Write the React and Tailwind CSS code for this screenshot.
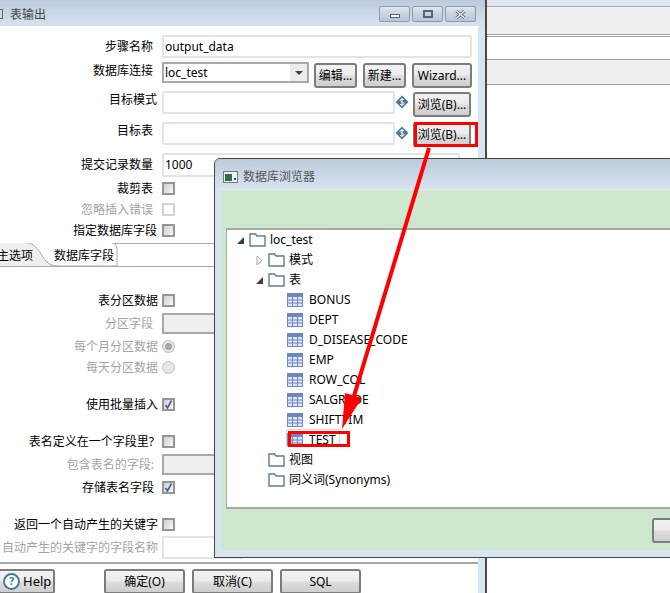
import React from 'react';

const cjk = "font-['Noto_Sans','Noto_Sans_CJK_SC',sans-serif]";
const glossy = "bg-[linear-gradient(#f3f3f3,#ebebeb_48%,#dcdcdc_52%,#cfcfcf)]";

const Btn = ({ children, className = '' }) => (
    <div className={`flex items-center justify-center border-2 border-[#7d7d7d] rounded-[3px] text-[12px] text-black ${glossy} ${className}`}>
        {children}
    </div>
);

const Input = ({ children, className = '' }) => (
    <div className={`flex items-center pl-px border-2 border-[#e3e4ea] rounded-[2px] bg-white text-[12px] text-black ${className}`}>
        {children}
    </div>
);

const Check = ({ checked = false, disabled = false }) => (
    <div className={`w-[13px] h-[13px] border-2 border-solid flex items-center justify-center ${disabled ? 'border-[#d2d2d2] bg-white' : 'border-[#959595] bg-[linear-gradient(135deg,#d0d0d0,#f6f6f6)]'}`}>
        {checked && (
            <svg width="9" height="9" viewBox="0 0 9 9">
                <path d="M1.5 5 L3.5 8 L7.5 0.5" fill="none" stroke="#4a5aa0" strokeWidth="1.6" />
            </svg>
        )}
    </div>
);

const Radio = ({ on = false }) => (
    <div className="w-[13px] h-[13px] rounded-full border border-[#bdbdbd] bg-[#e6e6e6] flex items-center justify-center">
        {on && <div className="w-[7px] h-[7px] rounded-full bg-[#a8a8a8]" />}
    </div>
);

const Row = ({ label, pad = 'pr-[9px]', muted = false, className = '', children }) => (
    <div className={`flex items-center shrink-0 ${className}`}>
        <div className={`w-[162px] shrink-0 text-right whitespace-nowrap text-[12px] ${pad} ${muted ? 'text-[#a3a3a3]' : 'text-black'}`}>{label}</div>
        {children}
    </div>
);

const Dollar = () => (
    <svg width="14" height="14" viewBox="0 0 14 14" className="shrink-0">
        <path d="M7 0.5 L13.5 7 L7 13.5 L0.5 7 Z" fill="#4d7a99" />
        <path d="M9 4.8 C8.2 3.8 5.2 3.8 5.2 5.4 C5.2 7 8.9 6.8 8.9 8.6 C8.9 10.2 5.8 10.2 5 9.2 M7 3 V11" fill="none" stroke="#fff" strokeWidth="1" />
    </svg>
);

const WinBtn = ({ children, className = '' }) => (
    <div className={`h-[16px] flex items-center justify-center border border-[#8a9bb2] rounded-[2px] bg-[linear-gradient(#dfe6ee,#c8d3e0_50%,#b8c5d5)] ${className}`}>
        {children}
    </div>
);

const Folder = () => (
    <svg width="17" height="14" viewBox="0 0 17 14" className="shrink-0">
        <path d="M1 13 V1 H6.5 L8 3 H16 V13 Z" fill="#fff" stroke="#5a7d96" strokeWidth="1.4" />
    </svg>
);

const TableIcon = () => (
    <svg width="16" height="14" viewBox="0 0 16 14" className="shrink-0">
        <rect x="0.5" y="0.5" width="15" height="13" fill="#dfe6f6" stroke="#6d86c4" />
        <rect x="0.5" y="0.5" width="15" height="3.5" fill="#6d86c4" />
        <path d="M0.5 7 H15.5 M0.5 10 H15.5 M5.5 4 V13.5 M10.5 4 V13.5" stroke="#6d86c4" />
    </svg>
);

const Open = () => (
    <svg width="9" height="9" viewBox="0 0 9 9" className="shrink-0">
        <path d="M8 1 V8 H1 Z" fill="#404040" />
    </svg>
);

const Closed = () => (
    <svg width="9" height="11" viewBox="0 0 9 11" className="shrink-0">
        <path d="M2 1 L7 5.5 L2 10 Z" fill="#fff" stroke="#a6a6a6" />
    </svg>
);

const Node = ({ indent, arrow, icon, children, className = '' }) => (
    <div className={`h-[20px] flex items-center text-[12px] text-black whitespace-nowrap ${indent} ${className}`}>
        {arrow !== undefined && <div className="w-[14px] flex justify-center pr-[3px]">{arrow}</div>}
        {icon}
        <span className={icon.type === TableIcon ? 'ml-[6px]' : 'ml-[4px]'}>{children}</span>
    </div>
);

const tables = ['BONUS', 'DEPT', 'D_DISEASE_CODE', 'EMP', 'ROW_COL', 'SALGRADE', 'SHIFTTIM'];

const FormWindow = () => (
    <div className="absolute left-0 top-0 w-[487px] h-[593px] flex flex-col border-r-2 border-[#4a4a4a] bg-[#d7e4f2]">
        <div className="h-[26px] shrink-0 flex items-start bg-[linear-gradient(#bccbdb,#d6e2ef)]">
            <div className="w-[3px] h-[10px] mt-[9px] border-y border-r border-[#666]" />
            <span className="ml-[7px] mt-[6px] text-[12px] text-[#444]">表输出</span>
            <div className="ml-auto mr-[9px] mt-[6px] flex gap-[2px]">
                <WinBtn className="w-[31px]"><div className="w-[10px] h-[4px] mt-[4px] border border-[#55647a] bg-white" /></WinBtn>
                <WinBtn className="w-[31px]"><div className="w-[10px] h-[8px] border-2 border-[#55647a]" /></WinBtn>
                <WinBtn className="w-[31px]">
                    <svg width="11" height="9" viewBox="0 0 11 9">
                        <path d="M1.5 1 L9.5 8 M9.5 1 L1.5 8" stroke="#5b6b80" strokeWidth="3" />
                        <path d="M1.5 1 L9.5 8 M9.5 1 L1.5 8" stroke="#fff" strokeWidth="1.2" />
                    </svg>
                </WinBtn>
            </div>
        </div>
        <div className="flex-1 mr-[7px] bg-white flex flex-col pt-[9px] min-h-0">
            <Row label="步骤名称" className="h-[23px]"><Input className="w-[310px] h-[23px]">output_data</Input></Row>
            <Row label="数据库连接" className="mt-[4px] h-[26px] !items-start">
                <div className="w-[147px] h-[21px] flex items-center pl-px border-2 border-[#a9a9a9] text-[12px] justify-between">
                    loc_test
                    <div className="w-[17px] h-full bg-[#ececec] flex items-center justify-center">
                        <div className="border-x-[4px] border-x-transparent border-t-[4px] border-t-[#444]" />
                    </div>
                </div>
                <Btn className="w-[43px] h-[25px] ml-[5px] mt-[1px]">编辑...</Btn>
                <Btn className="w-[43px] h-[25px] ml-[6px] mt-[1px]">新建...</Btn>
                <Btn className="w-[60px] h-[25px] ml-[6px] mt-[1px]">Wizard...</Btn>
            </Row>
            <Row label="目标模式" pad="pr-[5px]" className="mt-[3px] h-[26px] !items-start">
                <Input className="w-[233px] h-[23px]" />
                <div className="mt-[4px]"><Dollar /></div>
                <Btn className="w-[58px] h-[25px] ml-[4px] mt-[1px]">浏览(B)...</Btn>
            </Row>
            <Row label="目标表" className="mt-[5px] h-[26px] !items-start">
                <Input className="w-[233px] h-[23px]" />
                <div className="mt-[4px]"><Dollar /></div>
                <Btn className="w-[58px] h-[25px] ml-[4px]">浏览(B)...</Btn>
            </Row>
            <Row label="提交记录数量" className="mt-[5px] h-[24px]"><Input className="w-[298px] h-[24px]">1000</Input></Row>
            <Row label="裁剪表" className="h-[21px] mt-[1px]"><Check /></Row>
            <Row label="忽略插入错误" muted className="h-[21px]"><Check disabled /></Row>
            <Row label="指定数据库字段" pad="pr-[5px]" className="h-[21px]"><Check /></Row>
            <div className="relative h-[24px] mt-[2px] shrink-0 border-y border-[#a9a9a9] text-[12px]">
                <svg width="120" height="24" viewBox="0 0 120 24" className="absolute left-0 -top-px">
                    <path d="M0 0 H27 C34 0 38 6 43 14 C47 21 52 23 60 23 H0 Z" fill="#efefef" />
                    <path d="M27 0 C34 0 38 6 43 14 C47 21 52 23 60 23 H117 V7 C117 3 115 0 112 0" fill="#fff" stroke="#a9a9a9" />
                </svg>
                <span className="absolute -left-[3px] top-[3px]">主选项</span>
                <span className="absolute left-[54px] top-[3px]">数据库字段</span>
            </div>
            <Row label="表分区数据" pad="pr-[4px]" className="mt-[22px] h-[23px]"><Check /></Row>
            <Row label="分区字段" muted className="h-[23px]"><div className="w-[80px] h-[21px] border-2 border-[#a9a9a9] bg-[#efefef]" /></Row>
            <Row label="每个月分区数据" muted pad="pr-[4px]" className="h-[23px]"><Radio on /></Row>
            <Row label="每天分区数据" muted pad="pr-[4px]" className="h-[19px]"><Radio /></Row>
            <Row label="使用批量插入" pad="pr-[4px]" className="mt-[16px] h-[23px]"><Check checked /></Row>
            <Row label="表名定义在一个字段里?" pad="pr-[8px]" className="mt-[14px] h-[23px]"><Check /></Row>
            <Row label="包含表名的字段:" muted pad="pr-[8px]" className="h-[23px]"><div className="w-[80px] h-[21px] border-2 border-[#a9a9a9] bg-[#efefef]" /></Row>
            <Row label="存储表名字段" pad="pr-[8px]" className="h-[23px]"><Check checked /></Row>
            <Row label="返回一个自动产生的关键字" pad="pr-[4px]" className="mt-[14px] h-[23px]"><Check /></Row>
            <Row label="自动产生的关键字的字段名称" muted pad="pr-[4px]" className="h-[23px]"><div className="w-[80px] h-[23px] border-2 border-[#e3e4ea]" /></Row>
            <div className="mt-[3px] border-t-2 border-[#a9a9a9] flex items-start pt-[5px] gap-[7px] shrink-0 relative">
                <Btn className="w-[57px] h-[25px] -ml-[2px] mr-[42px] gap-[3px] !justify-start pl-[3px] text-[13px]">
                    <span className="w-[17px] h-[17px] rounded-full border-2 border-[#4a7a9b] bg-white flex items-center justify-center text-[11px] font-bold text-[#4a7a9b]">?</span>
                    Help
                </Btn>
                <Btn className="w-[81px] h-[25px]">确定(O)</Btn>
                <Btn className="w-[81px] h-[25px]">取消(C)</Btn>
                <Btn className="w-[81px] h-[25px]">SQL</Btn>
            </div>
        </div>
    </div>
);

const BackWindow = () => (
    <div className="absolute left-[487px] top-0 right-0 h-[159px] flex flex-col bg-white">
        <div className="h-[7px] shrink-0 bg-[#e0e6f4] border-b border-[#a9a9b9]" />
        <div className="h-[27px] shrink-0 bg-[#efefef]" />
        <div className="h-[3px] shrink-0 border-y border-[#a0a0a0]" />
        <div className="h-[22px] shrink-0" />
        <div className="h-[26px] shrink-0 bg-[#efefef] border-y border-[#a0a0a0]" />
    </div>
);

const BrowserDialog = () => (
    <div className="absolute left-[214px] top-[158px] w-[480px] h-[400px] flex flex-col border border-[#444] rounded-tl-[6px] overflow-hidden bg-[#d7e4f2]">
        <div className="h-[30px] shrink-0 flex items-center pt-[6px] bg-[linear-gradient(#bccbdb,#d6e2ef)]">
            <svg width="15" height="12" viewBox="0 0 15 12" className="ml-[8px]">
                <rect x="0.5" y="0.5" width="14" height="11" fill="#f2f2f2" stroke="#777" />
                <rect x="2" y="3" width="7" height="7" fill="#2f6f4f" />
                <rect x="11" y="7" width="2" height="2" fill="#444" />
            </svg>
            <span className="ml-[5px] text-[12px] text-[#555]">数据库浏览器</span>
        </div>
        <div className="flex-1 ml-[6px] mb-[7px] flex flex-col bg-[#cde8cf] border-t border-[#e8e8e8]">
            <div className="h-[38px] shrink-0" />
            <div className="h-[281px] ml-[5px] shrink-0 bg-white border-y-2 border-l border-[#a9a9a9] border-t-[#a9a9a9]">
                <Node indent="ml-[8px]" arrow={<Open />} icon={<Folder />}>loc_test</Node>
                <Node indent="ml-[27px]" arrow={<Closed />} icon={<Folder />}>模式</Node>
                <Node indent="ml-[27px]" arrow={<Open />} icon={<Folder />}>表</Node>
                {tables.map((t) => <Node key={t} indent="ml-[60px]" icon={<TableIcon />}>{t}</Node>)}
                <Node indent="ml-[60px]" icon={<TableIcon />}>TEST</Node>
                <Node indent="ml-[41px]" icon={<Folder />}>视图</Node>
                <Node indent="ml-[41px]" icon={<Folder />}>同义词(Synonyms)</Node>
            </div>
            <div className="flex-1 pt-[9px] pl-[431px]">
                <Btn className="w-[60px] h-[25px]" />
            </div>
        </div>
    </div>
);

export default function App() {
    return (
        <div className={`relative w-[670px] h-[593px] overflow-hidden bg-white ${cjk}`}>
            <BackWindow />
            <FormWindow />
            <BrowserDialog />
            {/* selected row outline, red markers from the annotated screenshot */}
            <div className="absolute left-[286px] top-[429px] w-[54px] h-[18px] border border-[#d9d9d9] rounded-[2px]" />
            <div className="absolute left-[414px] top-[122px] w-[64px] h-[25px] border-[3px] border-[#f00]" />
            <div className="absolute left-[288px] top-[431px] w-[62px] h-[16px] border-[3px] border-[#f00]" />
            <svg width="670" height="593" viewBox="0 0 670 593" className="absolute left-0 top-0 pointer-events-none">
                <path d="M429 148 L354 396" stroke="#f00" strokeWidth="4" fill="none" />
                <path d="M342 429 L345 393 L362 398 Z" fill="#f00" />
            </svg>
        </div>
    );
}
